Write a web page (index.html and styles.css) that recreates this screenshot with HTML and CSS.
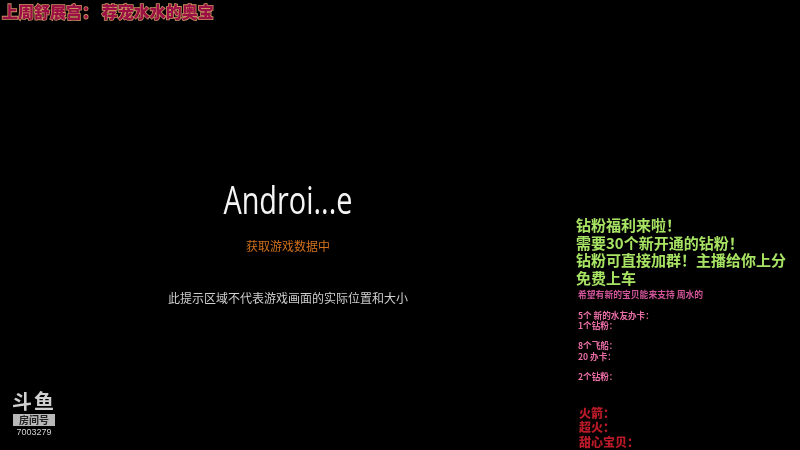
FILE: index.html
```html
<!DOCTYPE html>
<html lang="zh-CN">
<head>
<meta charset="utf-8">
<title>Android</title>
<link rel="stylesheet" href="styles.css">
</head>
<body>
<div class="screen">
  <main class="stage">
    <h1 class="banner">上周舒展宫： 荐宠水水的奥宝</h1>
    <section class="loading">
      <div class="game-name">Androi...e</div>
      <div class="status">获取游戏数据中</div>
      <div class="hint">此提示区域不代表游戏画面的实际位置和大小</div>
    </section>
    <div class="room">
      <div class="room-logo">斗鱼</div>
      <div class="room-label">房间号</div>
      <div class="room-id">7003279</div>
    </div>
  </main>
  <aside class="notes">
    <div class="promo">钻粉福利来啦！<br>需要30个新开通的钻粉！<br>钻粉可直接加群！主播给你上分<br>免费上车</div>
    <div class="wish">希望有新的宝贝能来支持 周水的</div>
    <div class="list first">5个 新的水友办卡：<br>1个钻粉：</div>
    <div class="list second">8个飞船：<br>20 办卡：</div>
    <div class="list third">2个钻粉：</div>
    <div class="gifts">火箭：<br>超火：<br>甜心宝贝：</div>
  </aside>
</div>
</body>
</html>
```
FILE: styles.css
```css
html, body {
  margin: 0;
  padding: 0;
  background: #000;
}
.screen {
  display: flex;
  width: 800px;
  height: 450px;
  overflow: hidden;
  background: #000;
  font-family: "Noto Sans CJK SC", "Noto Sans", sans-serif;
  filter: blur(0.5px);
}
.stage {
  display: flex;
  flex-direction: column;
  width: 576px;
  height: 450px;
}
.banner {
  margin: 2px 0 0 2px;
  font-size: 16px;
  line-height: 18px;
  font-weight: 900;
  white-space: nowrap;
  color: #9c0f45;
  -webkit-text-stroke: 1.6px #c89060;
  paint-order: stroke fill;
}
.loading {
  display: flex;
  flex-direction: column;
  align-items: center;
  margin-top: 153px;
}
.game-name {
  font-family: "Open Sans", sans-serif;
  font-weight: 400;
  font-size: 38px;
  line-height: 52px;
  color: #f4f4f4;
  transform: scaleX(0.76);
}
.status {
  margin-top: 12px;
  font-size: 12px;
  line-height: 18px;
  color: #d0701c;
}
.hint {
  margin-top: 34px;
  font-size: 12px;
  line-height: 18px;
  color: #cfcfcf;
}
.room {
  display: flex;
  flex-direction: column;
  align-items: center;
  width: 46px;
  margin: auto 0 12px 11px;
}
.room-logo {
  font-size: 20px;
  line-height: 20px;
  font-weight: 700;
  letter-spacing: 2px;
  color: #d0d0d0;
}
.room-label {
  width: 42px;
  margin-top: 3px;
  background: #b8b8b8;
  color: #222;
  font-size: 10px;
  line-height: 12px;
  font-weight: 700;
  text-align: center;
}
.room-id {
  font-family: "Liberation Sans", sans-serif;
  font-size: 9px;
  line-height: 12px;
  color: #d4d4d4;
  white-space: nowrap;
}
.notes {
  flex: 1;
  padding-top: 216px;
  white-space: nowrap;
}
.promo {
  font-size: 15px;
  line-height: 17.7px;
  font-weight: 700;
  color: #a8e464;
}
.wish {
  margin: 2px 0 0 2px;
  font-size: 8.8px;
  line-height: 11px;
  font-weight: 700;
  color: #d2559a;
}
.list {
  margin-left: 2px;
  font-size: 8.6px;
  line-height: 10.5px;
  font-weight: 700;
  color: #ea6ea6;
}
.first { margin-top: 10px; }
.second { margin-top: 9.5px; }
.third { margin-top: 10px; }
.gifts {
  margin: 24px 0 0 3px;
  font-size: 12px;
  line-height: 14.5px;
  font-weight: 900;
  color: #b81a28;
}
```
